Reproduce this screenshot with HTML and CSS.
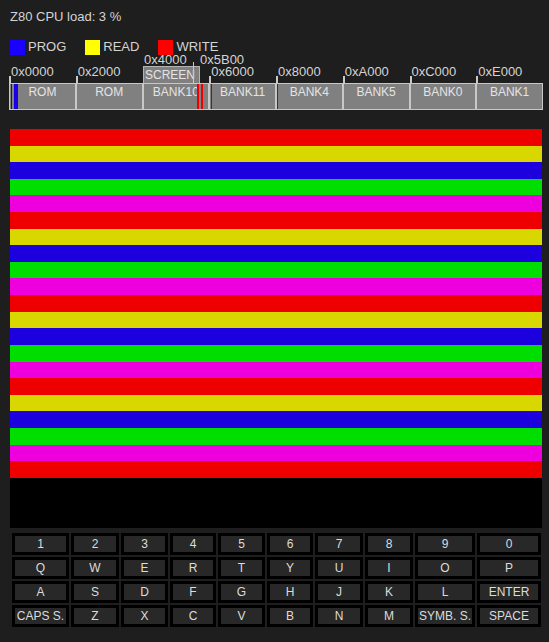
FILE: index.html
```html
<!DOCTYPE html>
<html lang="en">
<head>
<meta charset="utf-8">
<title>Z80 Emulator</title>
<link rel="stylesheet" href="styles.css">
</head>
<body>
<div class="app">
  <div class="title">Z80 CPU load: 3 %</div>
  <div class="legend">
    <div class="legend-item"><span class="swatch swatch-prog"></span><span>PROG</span></div>
    <div class="legend-item"><span class="swatch swatch-read"></span><span>READ</span></div>
    <div class="legend-item"><span class="swatch swatch-write"></span><span>WRITE</span></div>
  </div>

  <div class="memmap">
    <div class="addr-row">
      <div class="addr">0x0000</div>
      <div class="addr">0x2000</div>
      <div class="addr addr-empty"></div>
      <div class="addr">0x6000</div>
      <div class="addr">0x8000</div>
      <div class="addr">0xA000</div>
      <div class="addr">0xC000</div>
      <div class="addr">0xE000</div>
    </div>
    <div class="bank-row">
      <div class="bank bank-first">ROM</div>
      <div class="bank">ROM</div>
      <div class="bank">BANK10</div>
      <div class="bank">BANK11</div>
      <div class="bank">BANK4</div>
      <div class="bank">BANK5</div>
      <div class="bank">BANK0</div>
      <div class="bank bank-last">BANK1</div>
    </div>

    <div class="screen-label addr-4000">0x4000</div>
    <div class="screen-label addr-5b00">0x5B00</div>
    <div class="screen-box">SCREEN</div>
    <div class="attr-line"></div>

    <div class="mark mark-prog m1"></div>
    <div class="mark mark-prog m2"></div>
    <div class="mark mark-write m3"></div>
    <div class="mark mark-write m4"></div>
    <div class="mark mark-prog thin m5"></div>
    <div class="mark mark-prog thin m6"></div>
  </div>

  <div class="screen">
    <div class="stripe s-red"></div>
    <div class="stripe s-yellow"></div>
    <div class="stripe s-blue"></div>
    <div class="stripe s-green"></div>
    <div class="stripe s-magenta"></div>
    <div class="stripe s-red"></div>
    <div class="stripe s-yellow"></div>
    <div class="stripe s-blue"></div>
    <div class="stripe s-green"></div>
    <div class="stripe s-magenta"></div>
    <div class="stripe s-red"></div>
    <div class="stripe s-yellow"></div>
    <div class="stripe s-blue"></div>
    <div class="stripe s-green"></div>
    <div class="stripe s-magenta"></div>
    <div class="stripe s-red"></div>
    <div class="stripe s-yellow"></div>
    <div class="stripe s-blue"></div>
    <div class="stripe s-green"></div>
    <div class="stripe s-magenta"></div>
    <div class="stripe s-red"></div>
  </div>

  <div class="keyboard">
    <div class="key"><span>1</span></div>
    <div class="key"><span>2</span></div>
    <div class="key"><span>3</span></div>
    <div class="key"><span>4</span></div>
    <div class="key"><span>5</span></div>
    <div class="key"><span>6</span></div>
    <div class="key"><span>7</span></div>
    <div class="key"><span>8</span></div>
    <div class="key"><span>9</span></div>
    <div class="key"><span>0</span></div>

    <div class="key"><span>Q</span></div>
    <div class="key"><span>W</span></div>
    <div class="key"><span>E</span></div>
    <div class="key"><span>R</span></div>
    <div class="key"><span>T</span></div>
    <div class="key"><span>Y</span></div>
    <div class="key"><span>U</span></div>
    <div class="key"><span>I</span></div>
    <div class="key"><span>O</span></div>
    <div class="key"><span>P</span></div>

    <div class="key"><span>A</span></div>
    <div class="key"><span>S</span></div>
    <div class="key"><span>D</span></div>
    <div class="key"><span>F</span></div>
    <div class="key"><span>G</span></div>
    <div class="key"><span>H</span></div>
    <div class="key"><span>J</span></div>
    <div class="key"><span>K</span></div>
    <div class="key"><span>L</span></div>
    <div class="key"><span>ENTER</span></div>

    <div class="key"><span>CAPS S.</span></div>
    <div class="key"><span>Z</span></div>
    <div class="key"><span>X</span></div>
    <div class="key"><span>C</span></div>
    <div class="key"><span>V</span></div>
    <div class="key"><span>B</span></div>
    <div class="key"><span>N</span></div>
    <div class="key"><span>M</span></div>
    <div class="key"><span>SYMB. S.</span></div>
    <div class="key"><span>SPACE</span></div>
  </div>
</div>
</body>
</html>
```

FILE: styles.css
```css
* { box-sizing: border-box; }

html, body {
  margin: 0;
  padding: 0;
  background: #1e1e1e;
}

body {
  font-family: "Liberation Sans", Arial, sans-serif;
  font-size: 13px;
  color: #d4d4d4;
}

.app {
  padding: 9px 0 0 9px;
  width: 549px;
}

.title {
  margin-left: 1px;
  line-height: 16px;
}

.legend {
  display: flex;
  align-items: center;
  gap: 19px;
  margin-top: 14px;
  margin-left: 1px;
  line-height: 16px;
}

.legend-item {
  display: flex;
  align-items: center;
  gap: 3px;
}

.swatch {
  display: block;
  width: 15px;
  height: 15px;
}
.swatch-prog { background: #1a00ff; }
.swatch-read { background: #ffff00; }
.swatch-write { background: #ff0000; }

/* memory map */
.memmap {
  position: relative;
  width: 534px;
  height: 55px;
  padding-top: 9px;
}

.addr-row {
  display: flex;
  height: 19px;
}

.addr {
  position: relative;
  flex: 1;
  padding-left: 2px;
  padding-top: 1px;
  line-height: 14px;
  color: #d4d4d4;
  white-space: nowrap;
}
.addr::before {
  content: "";
  position: absolute;
  left: 0;
  bottom: 0;
  width: 2px;
  height: 7px;
  background: #c8c8c8;
}
.addr-empty::before { display: none; }

.bank-row {
  display: flex;
  height: 27px;
  background: #808080;
  border-top: 1px solid #c8c8c8;
  border-bottom: 1px solid #c8c8c8;
}

.bank {
  flex: 1;
  text-align: center;
  font-size: 12px;
  line-height: 16px;
  color: #e4e4e4;
  border-left: 2px solid #c8c8c8;
  white-space: nowrap;
}
.bank-first { border-left-width: 1px; }
.bank-last { border-right: 1px solid #c8c8c8; }

.screen-label {
  position: absolute;
  top: 0;
  line-height: 10px;
  color: #d4d4d4;
}
.addr-4000 { left: 135px; }
.addr-5b00 { left: 191px; }

.screen-box {
  position: absolute;
  left: 134px;
  top: 11px;
  width: 57px;
  height: 17px;
  background: #808080;
  border: 1px solid #b4b4b4;
  border-bottom: none;
  font-size: 12px;
  line-height: 16px;
  padding-left: 1px;
  color: #e4e4e4;
  overflow: hidden;
  white-space: nowrap;
}

.attr-line {
  position: absolute;
  left: 184px;
  top: 7px;
  width: 1px;
  height: 21px;
  background: #c8c8c8;
}

.mark {
  position: absolute;
  top: 29px;
  height: 25px;
}
.mark-prog { background: #1a00e6; }
.mark-write { background: #ee0000; }
.m1 { left: 2px; width: 1px; }
.m2 { left: 5px; width: 4px; }
.m3 { left: 188px; width: 2px; }
.m4 { left: 192px; width: 2px; }
.thin { width: 1px; opacity: 0.8; }
.m5 { left: 202px; }
.m6 { left: 268px; }

/* screen */
.screen {
  margin-top: 19px;
  margin-left: 1px;
  width: 532px;
  height: 399px;
  background: #000;
  display: flex;
  flex-direction: column;
}

.stripe { height: 16.62px; flex: none; }
.s-red { background: #ee0000; }
.s-yellow { background: #d8d800; }
.s-blue { background: #1c00de; }
.s-green { background: #00de00; }
.s-magenta { background: #ee00de; }

/* keyboard */
.keyboard {
  margin-top: 5px;
  margin-left: 3px;
  display: grid;
  grid-template-columns: 57px 48px 47px 46px 47px 46px 48px 48px 60px 64px;
  grid-auto-rows: 22px;
  gap: 2px;
}

.key {
  background: #000;
  padding: 3px;
}
.key span {
  display: block;
  height: 16px;
  background: #282828;
  color: #dcdcdc;
  font-size: 12px;
  line-height: 16px;
  text-align: center;
  white-space: nowrap;
}
```
